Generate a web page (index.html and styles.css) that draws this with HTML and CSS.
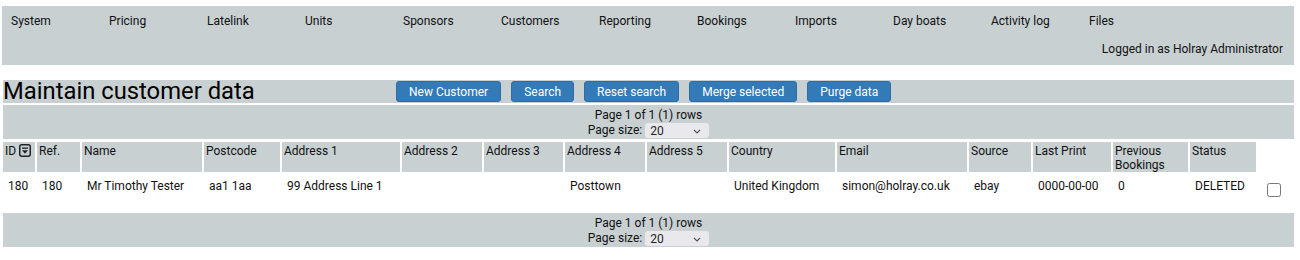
FILE: index.html
```html
<!DOCTYPE html>
<html lang="en">
<head>
    <meta charset="UTF-8">
    <title>Maintain customer data</title>
    <link rel="stylesheet" href="styles.css">
</head>
<body>
<header class="topnav">
    <nav class="menu">
        <a href="#">System</a>
        <a href="#">Pricing</a>
        <a href="#">Latelink</a>
        <a href="#">Units</a>
        <a href="#">Sponsors</a>
        <a href="#">Customers</a>
        <a href="#">Reporting</a>
        <a href="#">Bookings</a>
        <a href="#">Imports</a>
        <a href="#">Day boats</a>
        <a href="#">Activity log</a>
        <a href="#">Files</a>
    </nav>
    <div class="logged">Logged in as Holray Administrator</div>
</header>

<div class="page">
    <div class="titlebar">
        <h1>Maintain customer data</h1>
        <div class="buttons">
            <button>New Customer</button>
            <button>Search</button>
            <button>Reset search</button>
            <button>Merge selected</button>
            <button>Purge data</button>
        </div>
    </div>

    <div class="pager">
        <div>Page 1 of 1 (1) rows</div>
        <div>Page size: <span class="sel"><select><option>20</option><option>50</option><option>100</option></select><svg class="chev" width="8" height="5" viewBox="0 0 8 5"><path d="M1 1l3 3 3-3" fill="none" stroke="#555" stroke-width="1.1"/></svg></span></div>
    </div>

    <table class="grid">
        <thead>
            <tr>
                <th class="c-id">ID <svg class="sorticon" width="12" height="13" viewBox="0 0 12 13"><rect x="0.75" y="0.75" width="10.5" height="11.5" rx="2" fill="none" stroke="#222" stroke-width="1.5"/><rect x="3" y="3.5" width="6" height="1.3" fill="#222"/><path d="M3 6.3h6l-3 3.4z" fill="#222"/></svg></th>
                <th class="c-ref">Ref.</th>
                <th class="c-name">Name</th>
                <th class="c-post">Postcode</th>
                <th class="c-a1">Address 1</th>
                <th class="c-a2">Address 2</th>
                <th class="c-a3">Address 3</th>
                <th class="c-a4">Address 4</th>
                <th class="c-a5">Address 5</th>
                <th class="c-country">Country</th>
                <th class="c-email">Email</th>
                <th class="c-source">Source</th>
                <th class="c-print">Last Print</th>
                <th class="c-prev">Previous Bookings</th>
                <th class="c-status">Status</th>
                <th class="c-check blank"></th>
            </tr>
        </thead>
        <tbody>
            <tr>
                <td>180</td>
                <td>180</td>
                <td>Mr Timothy Tester</td>
                <td>aa1 1aa</td>
                <td>99 Address Line 1</td>
                <td></td>
                <td></td>
                <td>Posttown</td>
                <td></td>
                <td>United Kingdom</td>
                <td>simon@holray.co.uk</td>
                <td>ebay</td>
                <td>0000-00-00</td>
                <td>0</td>
                <td>DELETED</td>
                <td class="check"><input type="checkbox"></td>
            </tr>
        </tbody>
    </table>

    <div class="pager">
        <div>Page 1 of 1 (1) rows</div>
        <div>Page size: <span class="sel"><select><option>20</option><option>50</option><option>100</option></select><svg class="chev" width="8" height="5" viewBox="0 0 8 5"><path d="M1 1l3 3 3-3" fill="none" stroke="#555" stroke-width="1.1"/></svg></span></div>
    </div>
</div>
</body>
</html>
```

FILE: styles.css
```css
body {
    margin: 0;
    font-family: Roboto, "Liberation Sans", sans-serif;
    font-size: 12px;
    color: #111;
    background-color: white;
}
.topnav {
    margin: 6px 0 0 2px;
    width: 1292px;
    height: 59px;
    background-color: #c8d0d1;
    box-sizing: border-box;
    padding: 8px 11px 0 9px;
}
.menu {
    display: flex;
    line-height: 14px;
}
.menu a {
    width: 98px;
    color: #111;
    text-decoration: none;
}
.logged {
    margin-top: 14px;
    text-align: right;
    line-height: 14px;
}
.page {
    margin-left: 3px;
    width: 1291px;
}
.titlebar {
    margin-top: 15px;
    height: 23px;
    background-color: #c8d0d1;
    display: flex;
    align-items: center;
}
h1 {
    margin: 0;
    width: 393px;
    font-size: 23.8px;
    font-weight: normal;
    line-height: 23px;
    color: #000;
}
.buttons {
    display: flex;
    gap: 10px;
}
button {
    height: 21px;
    padding: 0 12px;
    background-color: #337ab7;
    color: white;
    border: 1px solid #2e6da4;
    border-radius: 3px;
    font-family: Roboto, "Liberation Sans", sans-serif;
    font-size: 12px;
    cursor: pointer;
}
.pager {
    margin-top: 2px;
    height: 34px;
    background-color: #c8d0d1;
    text-align: center;
    line-height: 15px;
    padding-top: 3px;
    box-sizing: border-box;
}
.sel {
    position: relative;
    display: inline-block;
    vertical-align: top;
}
select {
    appearance: none;
    width: 64px;
    height: 15px;
    border: none;
    border-radius: 3px;
    background-color: #e9e9ed;
    padding: 0 0 0 5px;
    font-family: Roboto, "Liberation Sans", sans-serif;
    font-size: 12px;
    color: #222;
    text-align: left;
}
.chev {
    position: absolute;
    right: 8px;
    top: 6px;
}
.grid {
    table-layout: fixed;
    width: 1295px;
    margin: 1px -2px 11px -2px;
    border-spacing: 2px;
}
th {
    background-color: #c8d0d1;
    font-weight: normal;
    text-align: left;
    vertical-align: top;
    padding: 2px 2px 0 2px;
    height: 29px;
    box-sizing: border-box;
    line-height: 14px;
}
th.blank {
    background: none;
}
.sorticon {
    vertical-align: -2px;
}
td {
    padding: 5px 5px 7px 5px;
    line-height: 14px;
    white-space: nowrap;
}
td.check {
    padding: 6px 0 0 8px;
}
td.check input {
    margin: 3px 0 0 1px;
    width: 14px;
    height: 14px;
}
.c-id { width: 32px; }
.c-ref { width: 43px; }
.c-name { width: 120px; }
.c-post { width: 76px; }
.c-a1 { width: 118px; }
.c-a2 { width: 80px; }
.c-a3 { width: 79px; }
.c-a4 { width: 80px; }
.c-a5 { width: 80px; }
.c-country { width: 106px; }
.c-email { width: 130px; }
.c-source { width: 62px; }
.c-print { width: 78px; }
.c-prev { width: 75px; }
.c-status { width: 66px; }
.c-check { width: 36px; }
```
